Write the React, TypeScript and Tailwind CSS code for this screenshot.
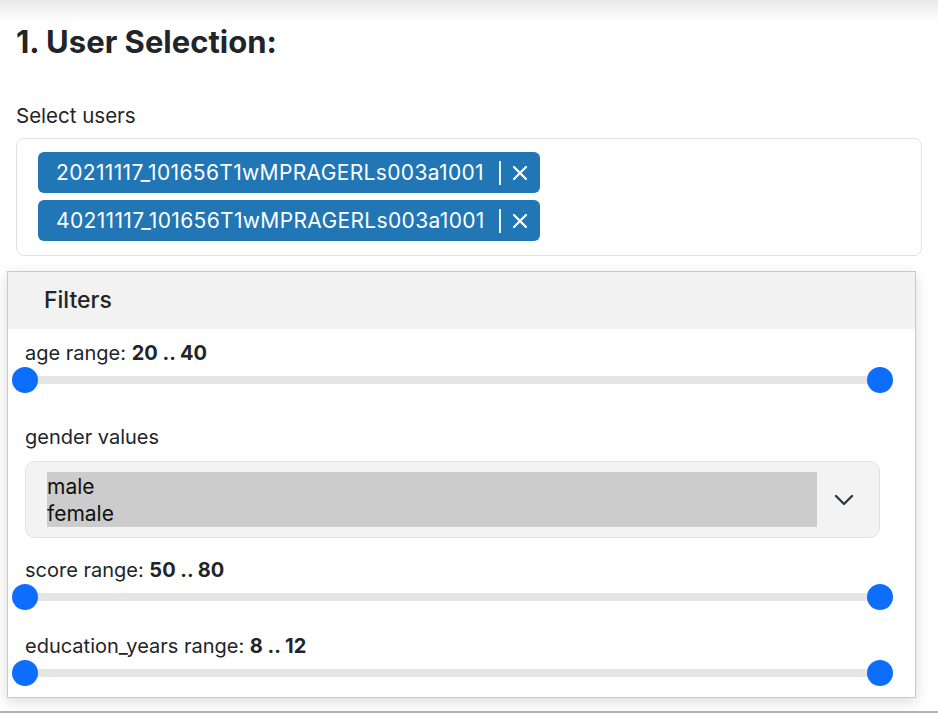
import React from "react";

function Slider({ label, value }: { label: string; value: string }) {
  return (
    <div>
      <div className="h-[28px] flex items-center text-[20px] text-[#212529] leading-none">
        <span>{label}:&nbsp;</span>
        <span className="font-bold">{value}</span>
      </div>
      <div className="relative h-[26px]">
        <div className="absolute left-0 right-0 top-[9px] h-[8px] bg-[#e5e5e5]" />
        <div className="absolute left-[-13px] top-0 w-[26px] h-[26px] rounded-full bg-[#0d6efd]" />
        <div className="absolute right-[-13px] top-0 w-[26px] h-[26px] rounded-full bg-[#0d6efd]" />
      </div>
    </div>
  );
}

function Chip({ text }: { text: string }) {
  return (
    <div className="flex items-center h-[41px] w-[502px] rounded-[6px] bg-[#2176b6] text-white pl-[18px] pr-[12px]">
      <span className="text-[21px] leading-none tracking-[0.35px]">{text}</span>
      <span className="ml-auto w-[2px] h-[24px] bg-white/90" />
      <svg className="ml-[11px]" width="16" height="16" viewBox="0 0 16 16">
        <path d="M2 2 L14 14 M14 2 L2 14" stroke="white" strokeWidth="2.2" strokeLinecap="round" />
      </svg>
    </div>
  );
}

export default function App() {
  return (
    <div className="w-[938px] h-[718px] bg-white overflow-hidden font-['Inter',sans-serif] text-[#212529] flex flex-col">
      <div className="h-[22px] shrink-0 bg-gradient-to-b from-[#e9e9e9] to-white" />
      <div className="px-4">
        <h1 className="text-[31px] font-bold leading-none h-[36px] pt-[4px]">1. User Selection:</h1>
        <div className="mt-[48px] text-[20.5px] leading-none h-[20px]">Select users</div>
        <div className="mt-[12px] h-[118px] border border-[#dee2e6] rounded-[8px] pl-[21px] pt-[13px] flex flex-col gap-[7px]">
          <Chip text="20211117_101656T1wMPRAGERLs003a1001" />
          <Chip text="40211117_101656T1wMPRAGERLs003a1001" />
        </div>
      </div>
      <div className="ml-[7px] mt-[15px] w-[909px] h-[427px] shrink-0 border border-[#c9c9c9] shadow-[0_4px_14px_rgba(0,0,0,0.14)] bg-white">
        <div className="h-[57px] bg-[#f2f2f2] flex items-center pl-[36px] text-[23px] font-medium">Filters</div>
        <div className="pl-[17px] pr-[35px] pt-[10px]">
          <Slider label="age range" value="20 .. 40" />
          <div className="mt-[30px] h-[28px] flex items-center text-[20px] leading-none">gender values</div>
          <div className="mt-[10px] h-[77px] rounded-[10px] border border-[#dee2e6] bg-[#f3f3f3] flex items-center pl-[21px] pr-[25px]">
            <div className="w-[770px] h-[55px] bg-[#cccccc] flex flex-col justify-center text-[21px] leading-[27px] text-[#111]">
              <div>male</div>
              <div>female</div>
            </div>
            <svg className="ml-auto" width="20" height="12" viewBox="0 0 20 12">
              <path d="M2 2 L10 10 L18 2" fill="none" stroke="#343a40" strokeWidth="2.4" strokeLinecap="round" strokeLinejoin="round" />
            </svg>
          </div>
          <div className="mt-[18px]">
            <Slider label="score range" value="50 .. 80" />
          </div>
          <div className="mt-[22px]">
            <Slider label="education_years range" value="8 .. 12" />
          </div>
        </div>
      </div>
      <div className="mt-[13px] h-[2px] shrink-0 bg-[#b3b3b3]" />
    </div>
  );
}
